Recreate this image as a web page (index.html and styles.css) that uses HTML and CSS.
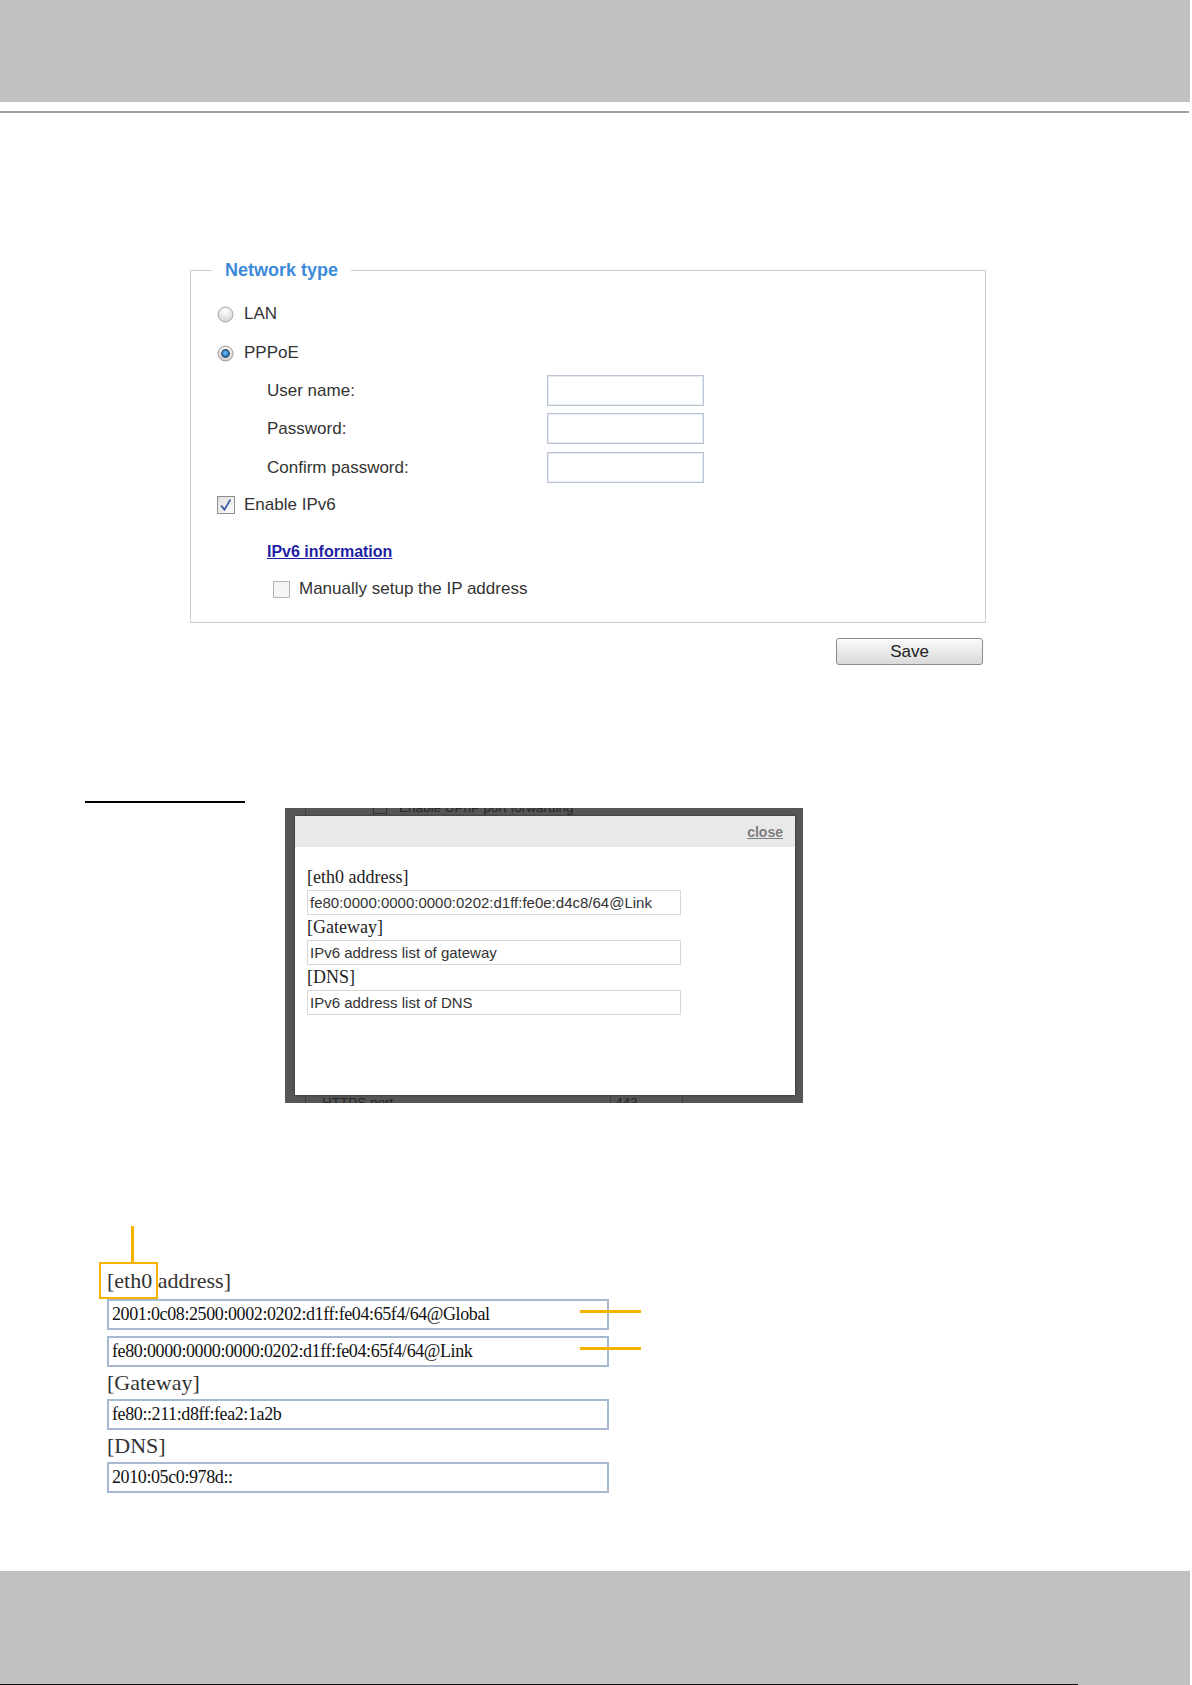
FILE: index.html
```html
<!DOCTYPE html>
<html lang="en">
<head>
    <meta charset="UTF-8">
    <meta name="viewport" content="width=device-width, initial-scale=1.0">
    <title>Network type - PPPoE</title>
    <link rel="stylesheet" href="styles.css">
</head>
<body>
<div class="page">
    <header class="band"></header>
    <div class="rule"></div>

    <fieldset class="net">
        <legend>Network type</legend>
        <div class="opt">
            <svg class="radio" width="17" height="17" viewBox="0 0 17 17">
                <defs>
                    <radialGradient id="rg1" cx="50%" cy="30%" r="70%">
                        <stop offset="0" stop-color="#ffffff"/>
                        <stop offset="1" stop-color="#d2d2d2"/>
                    </radialGradient>
                </defs>
                <circle cx="8.5" cy="8.5" r="7.5" fill="url(#rg1)" stroke="#a4a4a4"/>
            </svg>
            LAN
        </div>
        <div class="opt gap-s">
            <svg class="radio" width="17" height="17" viewBox="0 0 17 17">
                <defs>
                    <radialGradient id="rg2" cx="50%" cy="30%" r="70%">
                        <stop offset="0" stop-color="#ffffff"/>
                        <stop offset="1" stop-color="#cfcfcf"/>
                    </radialGradient>
                    <radialGradient id="dot" cx="45%" cy="40%" r="60%">
                        <stop offset="0" stop-color="#6fc3ff"/>
                        <stop offset="1" stop-color="#1b6fb8"/>
                    </radialGradient>
                </defs>
                <circle cx="8.5" cy="8.5" r="7.5" fill="url(#rg2)" stroke="#9c9c9c"/>
                <circle cx="8.5" cy="8.5" r="4.4" fill="#34414f"/>
                <circle cx="8.5" cy="8.5" r="3.3" fill="url(#dot)"/>
            </svg>
            PPPoE
        </div>
        <div class="field f1"><label>User name:</label><span class="box"></span></div>
        <div class="field f2"><label>Password:</label><span class="box"></span></div>
        <div class="field f3"><label>Confirm password:</label><span class="box"></span></div>
        <div class="opt gap-m">
            <svg class="check" width="18" height="18" viewBox="0 0 18 18">
                <defs>
                    <linearGradient id="cg" x1="0" y1="0" x2="1" y2="1">
                        <stop offset="0" stop-color="#dcdcdc"/>
                        <stop offset="1" stop-color="#ffffff"/>
                    </linearGradient>
                </defs>
                <rect x="0.5" y="0.5" width="17" height="17" fill="url(#cg)" stroke="#8e8e8e"/>
                <path d="M4.2 9.6 L7.4 13.6 L13.4 3.6" fill="none" stroke="#3d57a3" stroke-width="1.8"/>
            </svg>
            Enable IPv6
        </div>
        <div class="sub"><a href="#">IPv6 information</a></div>
        <div class="opt manual">
            <svg class="check" width="17" height="17" viewBox="0 0 17 17">
                <rect x="0.5" y="0.5" width="16" height="16" fill="#f5f5f5" stroke="#b4b4b4"/>
            </svg>
            Manually setup the IP address
        </div>
    </fieldset>
    <div class="actions"><button type="button">Save</button></div>

    <div class="shot">
        <div class="blank"></div>
        <div class="dialog">
            <div class="peek top">
                <i class="vline"></i>
                <span class="pk-box"></span>
                <span class="pk-text">Enable UPnP port forwarding</span>
            </div>
            <div class="frame">
                <div class="panel">
                    <div class="panel-head"><a href="#">close</a></div>
                    <div class="panel-body">
                        <div class="plabel">[eth0 address]</div>
                        <div class="pinput">fe80:0000:0000:0000:0202:d1ff:fe0e:d4c8/64@Link</div>
                        <div class="plabel">[Gateway]</div>
                        <div class="pinput">IPv6 address list of gateway</div>
                        <div class="plabel">[DNS]</div>
                        <div class="pinput">IPv6 address list of DNS</div>
                    </div>
                </div>
            </div>
            <div class="peek bottom">
                <i class="vline"></i>
                <span class="pk-text">HTTPS port</span>
                <i class="vline v2"></i>
                <span class="pk-text num">443</span>
                <i class="vline v3"></i>
            </div>
        </div>
    </div>

    <div class="detail">
        <div class="pointer"></div>
        <div class="dlabel first">[eth0 address]<span class="mark"></span></div>
        <div class="addr-row">
            <div class="addr">2001:0c08:2500:0002:0202:d1ff:fe04:65f4/64@Global</div>
            <span class="tick"></span>
        </div>
        <div class="addr-row second">
            <div class="addr">fe80:0000:0000:0000:0202:d1ff:fe04:65f4/64@Link</div>
            <span class="tick"></span>
        </div>
        <div class="dlabel">[Gateway]</div>
        <div class="addr">fe80::211:d8ff:fea2:1a2b</div>
        <div class="dlabel">[DNS]</div>
        <div class="addr">2010:05c0:978d::</div>
    </div>

    <footer class="band foot"><div class="edge"></div></footer>
</div>
</body>
</html>
```

FILE: styles.css
```css
body {
    margin: 0;
    font-family: "Liberation Sans", Arial, sans-serif;
    color: #333;
    background: #fff;
}
.page {
    min-height: 100vh;
    display: flex;
    flex-direction: column;
}
.band {
    width: 1190px;
    height: 102px;
    background-color: #bfc1c0;
}
.rule {
    width: 1189px;
    height: 2px;
    margin-top: 9px;
    background-color: #a3a3a3;
}

/* network type box */
.net {
    box-sizing: border-box;
    width: 796px;
    margin: 147px 0 0 190px;
    padding: 20px 0 19px 26px;
    border: 1px solid #cdccc6;
    min-inline-size: 0;
    font-size: 17px;
}
.net legend {
    margin-left: -5px;
    padding: 0 13px;
    font-size: 18px;
    line-height: 20px;
    font-weight: bold;
    color: #3d8bd8;
}
.opt {
    display: flex;
    align-items: center;
    height: 28px;
}
.radio {
    margin-right: 10px;
}
.check {
    margin-right: 9px;
}
.gap-s {
    margin-top: 11px;
}
.gap-m {
    margin-top: 8px;
}
.field {
    display: flex;
    align-items: center;
    height: 31px;
    padding-left: 50px;
}
.field label {
    width: 280px;
}
.f1 { margin-top: 8px; }
.f2 { margin-top: 7px; }
.f3 { margin-top: 8px; }
.box {
    box-sizing: border-box;
    width: 157px;
    height: 31px;
    border: 1px solid #bac6d5;
    box-shadow: inset 0 0 0 1px #e6ebf2;
    background: #fff;
}
.sub {
    height: 28px;
    margin-top: 19px;
    padding-left: 50px;
    display: flex;
    align-items: center;
}
.sub a {
    font-size: 16px;
    font-weight: bold;
    color: #1f1fa6;
}
.manual {
    margin-top: 9px;
    padding-left: 56px;
}
.actions {
    box-sizing: border-box;
    width: 796px;
    margin: 15px 0 0 190px;
    padding-right: 3px;
    display: flex;
    justify-content: flex-end;
}
.actions button {
    width: 147px;
    height: 27px;
    border: 1px solid #8b8b8b;
    border-radius: 3px;
    background: linear-gradient(#fbfbfb, #e9e9e9 50%, #dadada);
    font-family: "Liberation Sans", Arial, sans-serif;
    font-size: 17px;
    color: #222;
    padding: 0;
}

/* screenshot of the popup */
.shot {
    display: flex;
    align-items: flex-start;
    margin-top: 136px;
    padding-left: 85px;
}
.blank {
    width: 160px;
    height: 2px;
    background: #000;
}
.dialog {
    width: 518px;
    margin: 7px 0 0 40px;
    background: #565656;
}
.peek {
    height: 8px;
    overflow: hidden;
    display: flex;
    font-size: 13.5px;
    line-height: 16px;
    color: #262626;
}
.peek.top {
    align-items: flex-end;
}
.peek.bottom {
    align-items: flex-start;
}
.vline {
    flex: none;
    width: 1px;
    height: 16px;
    margin-left: 20px;
    background: #3e3e3e;
}
.pk-box {
    flex: none;
    width: 12px;
    height: 12px;
    margin: 0 12px 2px 67px;
    border: 1px solid #333;
}
.pk-text {
    flex: none;
    height: 16px;
}
.peek.bottom .pk-text {
    margin-left: 16px;
}
.peek.bottom .v2 {
    margin-left: 217px;
}
.peek.bottom .pk-text.num {
    margin-left: 4px;
}
.peek.bottom .v3 {
    margin-left: 44px;
}
.frame {
    padding: 0 8px 0 10px;
}
.panel {
    width: 500px;
    height: 279px;
    background: #fff;
    box-shadow: 0 0 2px rgba(0, 0, 0, 0.6);
}
.panel-head {
    height: 31px;
    background: #e9e9e9;
    display: flex;
    align-items: center;
    justify-content: flex-end;
    padding-right: 12px;
}
.panel-head a {
    font-size: 14px;
    font-weight: bold;
    color: #7d7d7d;
}
.panel-body {
    padding: 18px 0 0 12px;
}
.plabel {
    height: 25px;
    line-height: 25px;
    font-family: "Liberation Serif", "Times New Roman", serif;
    font-size: 18px;
    color: #222;
}
.pinput {
    box-sizing: border-box;
    width: 374px;
    height: 25px;
    line-height: 23px;
    padding-left: 2px;
    border: 1px solid #d8d8d8;
    font-size: 15px;
    color: #333;
}

/* zoomed detail */
.detail {
    margin-top: 123px;
    padding-left: 107px;
    font-family: "Liberation Serif", "Times New Roman", serif;
    color: #333;
}
.pointer {
    width: 3px;
    height: 36px;
    margin-left: 24px;
    background: #f5b300;
}
.dlabel {
    height: 32px;
    line-height: 32px;
    font-size: 22px;
}
.dlabel.first {
    position: relative;
    height: 37px;
    line-height: 37px;
}
.mark {
    position: absolute;
    left: -8px;
    top: 0;
    width: 59px;
    height: 37px;
    box-sizing: border-box;
    border: 2px solid #f5b300;
}
.addr-row {
    position: relative;
    width: 502px;
}
.addr-row.second {
    margin-top: 6px;
}
.addr {
    box-sizing: border-box;
    width: 502px;
    height: 31px;
    line-height: 27px;
    padding-left: 3px;
    border: 2px solid #a6b9d0;
    font-size: 18px;
    letter-spacing: -0.4px;
    color: #111;
}
.tick {
    position: absolute;
    left: 473px;
    top: 11px;
    width: 61px;
    height: 3px;
    background: #f5b300;
}

.foot {
    margin-top: auto;
    height: 114px;
    display: flex;
    align-items: flex-end;
}
.edge {
    width: 1078px;
    height: 1px;
    background: #111;
}
```
